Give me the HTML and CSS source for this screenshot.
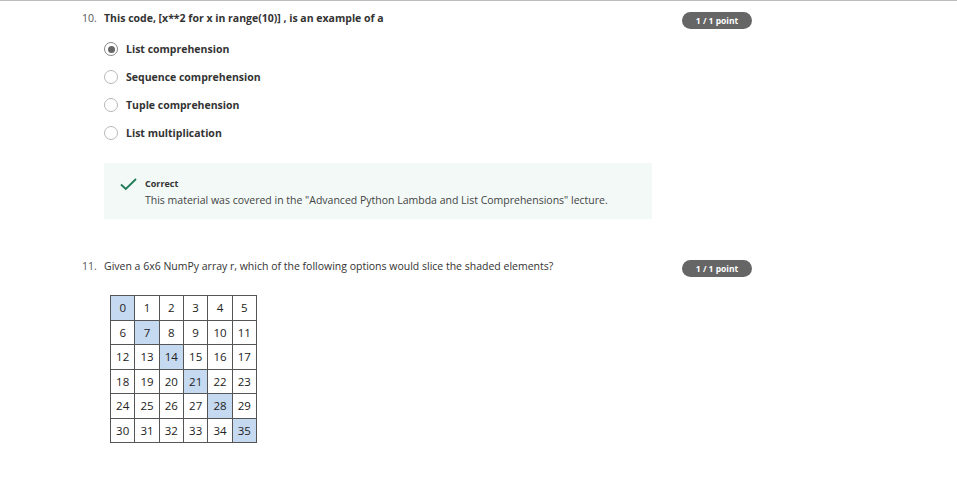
FILE: index.html
```html
<!DOCTYPE html>
<html>
<head>
<meta charset="utf-8">
<link rel="stylesheet" href="styles.css">
</head>
<body>
<div class="page">
  <div class="question q10">
    <div class="qmain">
      <div class="qhead">
        <span class="qnum">10.</span>
        <span class="qtext bold">This code, [x**2 for x in range(10)] , is an example of a</span>
      </div>
      <div class="options">
        <div class="option"><span class="radio checked"></span><span class="olabel">List comprehension</span></div>
        <div class="option"><span class="radio"></span><span class="olabel">Sequence comprehension</span></div>
        <div class="option"><span class="radio"></span><span class="olabel">Tuple comprehension</span></div>
        <div class="option"><span class="radio"></span><span class="olabel">List multiplication</span></div>
      </div>
      <div class="feedback">
        <svg class="check" width="17" height="13" viewBox="0 0 17 13"><path d="M1 6.5 L5.8 11 L16 1" fill="none" stroke="#1f7a56" stroke-width="1.8"/></svg>
        <div class="fbtext">
          <div class="fbtitle">Correct</div>
          <div class="fbbody">This material was covered in the "Advanced Python Lambda and List Comprehensions" lecture.</div>
        </div>
      </div>
    </div>
    <div class="badge">1 / 1 point</div>
  </div>

  <div class="question q11">
    <div class="qmain">
      <div class="qhead">
        <span class="qnum">11.</span>
        <span class="qtext">Given a 6x6 NumPy array r, which of the following options would slice the shaded elements?</span>
      </div>
      <table class="grid">
        <tr><td class="sh">0</td><td>1</td><td>2</td><td>3</td><td>4</td><td>5</td></tr>
        <tr><td>6</td><td class="sh">7</td><td>8</td><td>9</td><td>10</td><td>11</td></tr>
        <tr><td>12</td><td>13</td><td class="sh">14</td><td>15</td><td>16</td><td>17</td></tr>
        <tr><td>18</td><td>19</td><td>20</td><td class="sh">21</td><td>22</td><td>23</td></tr>
        <tr><td>24</td><td>25</td><td>26</td><td>27</td><td class="sh">28</td><td>29</td></tr>
        <tr><td>30</td><td>31</td><td>32</td><td>33</td><td>34</td><td class="sh">35</td></tr>
      </table>
    </div>
    <div class="badge">1 / 1 point</div>
  </div>
</div>
</body>
</html>
```

FILE: styles.css
```css
html, body {
  margin: 0;
  padding: 0;
  background: #fff;
}
body {
  font-family: "Open Sans", "Noto Sans", sans-serif;
  color: #333;
  width: 957px;
  height: 489px;
  overflow: hidden;
}
.page {
  border-top: 1px solid #bdbdbd;
}
.question {
  display: flex;
  padding-left: 82px;
}
.qmain {
  width: 600px;
}
.q10 {
  padding-top: 9px;
}
.q11 {
  padding-top: 39px;
}
.qhead {
  display: flex;
  font-size: 10.5px;
  line-height: 16px;
}
.qnum {
  width: 22px;
  color: #555;
}
.bold {
  font-weight: 700;
}
.options {
  margin-top: 9px;
  padding-left: 22px;
}
.option {
  display: flex;
  align-items: center;
  height: 28px;
}
.option:last-child {
  height: 27px;
}
.radio {
  box-sizing: border-box;
  width: 14px;
  height: 14px;
  border: 1px solid #b8b8b8;
  border-radius: 50%;
  margin-right: 8px;
  display: flex;
  align-items: center;
  justify-content: center;
}
.radio.checked {
  border-color: #888;
}
.radio.checked::after {
  content: "";
  width: 7px;
  height: 7px;
  border-radius: 50%;
  background: #666;
}
.olabel {
  font-size: 10.5px;
  font-weight: 700;
  color: #333;
}
.feedback {
  margin-top: 17px;
  margin-left: 22px;
  width: 548px;
  height: 56px;
  box-sizing: border-box;
  background: #f2f9f7;
  display: flex;
  padding: 14px 0 0 16px;
}
.check {
  margin-top: 1px;
  margin-right: 8px;
}
.fbtitle {
  font-size: 9px;
  font-weight: 700;
  line-height: 13px;
  color: #333;
}
.fbbody {
  font-size: 10.5px;
  line-height: 16px;
  margin-top: 2px;
  color: #444;
}
.badge {
  margin-top: 2px;
  width: 70px;
  height: 17px;
  border-radius: 9px;
  background: #666;
  color: #fff;
  font-size: 8.5px;
  font-weight: 700;
  line-height: 17px;
  text-align: center;
}
.grid {
  margin-top: 21px;
  margin-left: 28px;
  border-collapse: collapse;
  table-layout: fixed;
  width: 147px;
  font-family: "Open Sans", "Liberation Sans", sans-serif;
  font-size: 11.5px;
  color: #222;
}
.grid tr {
  height: 24.5px;
}
.grid td {
  border: 1px solid #555;
  padding: 0;
  text-align: center;
  vertical-align: middle;
  background: #fff;
  overflow: hidden;
}
.grid td.sh {
  background: #c5d9f1;
}
```
